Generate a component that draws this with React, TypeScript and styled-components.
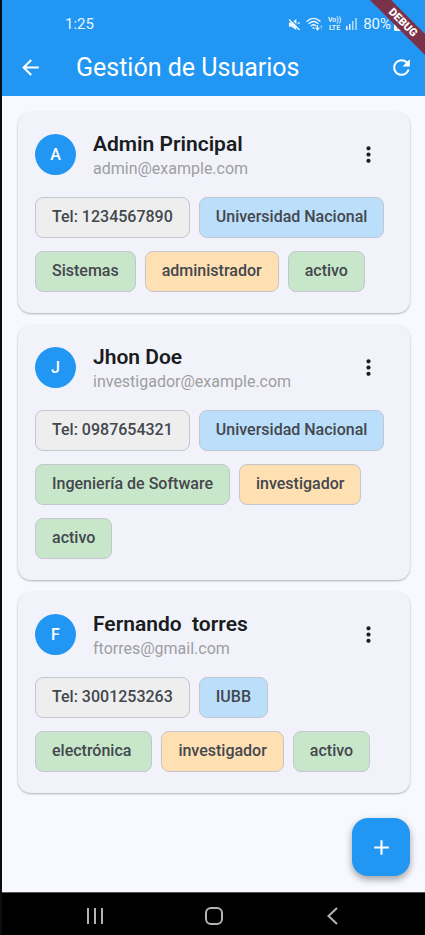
import React from 'react';
import styled, { createGlobalStyle } from 'styled-components';
import { MdAdd, MdArrowBack, MdMoreVert, MdRefresh } from 'react-icons/md';

const GlobalStyle = createGlobalStyle`
  *, *::before, *::after { box-sizing: border-box; }
  body {
    margin: 0;
    background: #f8f9ff;
    font-family: Roboto, 'Liberation Sans', sans-serif;
  }
  h1, h2, p, ul { margin: 0; padding: 0; }
  button { font: inherit; border: 0; padding: 0; cursor: pointer; }
`;

const Screen = styled.div`
  position: relative;
  display: flex;
  flex-direction: column;
  min-height: 100vh;
  overflow: hidden;
  border-left: 2px solid #0c0d0f;
  background: #f8f9ff;
`;

const Header = styled.header`
  background: #2196f3;
  color: #fff;
`;

const StatusBar = styled.div`
  display: flex;
  align-items: center;
  justify-content: space-between;
  height: 38px;
  padding: 10px 23px 0 63px;
  color: #e9f6ff;
  font-size: 15px;
  line-height: 20px;
`;

const StatusIcons = styled.div`
  display: flex;
  align-items: center;
  gap: 5px;
`;

const Volte = styled.span`
  display: flex;
  flex-direction: column;
  align-items: center;
  font-size: 7px;
  font-weight: 600;
  line-height: 8px;
`;

const Battery = styled.span`
  display: flex;
  align-items: center;
  gap: 3px;
`;

const AppBar = styled.div`
  display: flex;
  align-items: center;
  height: 58px;
  padding: 0 3px 0 8px;
`;

const Title = styled.h1`
  flex: 1;
  padding: 2px 0 0 25px;
  font-size: 25px;
  font-weight: 400;
  line-height: 32px;
`;

const IconButton = styled.button`
  display: flex;
  align-items: center;
  justify-content: center;
  width: 41px;
  height: 41px;
  border-radius: 50%;
  background: transparent;
  color: inherit;
  font-size: 25px;
`;

const Ribbon = styled.div`
  position: absolute;
  top: 15px;
  right: -38px;
  width: 120px;
  height: 15px;
  background: #7b3148;
  color: #fff;
  font-size: 11px;
  font-weight: 900;
  line-height: 15px;
  text-align: center;
  transform: rotate(45deg);
`;

const Content = styled.main`
  position: relative;
  flex: 1;
  padding: 16px 15px 98px 16px;
`;

const UserList = styled.ul`
  display: flex;
  flex-direction: column;
  gap: 12px;
  list-style: none;
`;

const Card = styled.li`
  padding: 16px 17px 21px;
  border-radius: 13px;
  background: #f2f3fa;
  box-shadow: 0 1px 2px rgba(0, 0, 0, 0.24), 0 1px 3px rgba(0, 0, 0, 0.06);
`;

const CardHeader = styled.div`
  display: flex;
  align-items: center;
  gap: 17px;
  height: 53px;
  margin-bottom: 16px;
  padding-right: 4px;
  color: #191c20;
`;

const Avatar = styled.div`
  display: flex;
  align-items: center;
  justify-content: center;
  width: 41px;
  height: 41px;
  border-radius: 50%;
  background: #2196f3;
  color: #fff;
  font-size: 16px;
  font-weight: 500;
`;

const Identity = styled.div`
  flex: 1;
  min-width: 0;
`;

const Name = styled.h2`
  font-size: 21px;
  font-weight: 600;
  line-height: 28px;
  white-space: pre;
`;

const Email = styled.p`
  color: #9e9ea1;
  font-size: 16px;
  line-height: 22px;
`;

const Chips = styled.ul`
  display: flex;
  flex-wrap: wrap;
  gap: 13px 9px;
  list-style: none;
`;

const tones = {
  grey: '#eeeeee',
  blue: '#bbdefb',
  green: '#c8e6c9',
  orange: '#ffe0b2',
};

type Tone = keyof typeof tones;

const Chip = styled.li<{ $tone: Tone }>`
  height: 41px;
  padding: 0 16px;
  border: 1px solid #c3c6cf;
  border-radius: 8px;
  background: ${({ $tone }) => tones[$tone]};
  color: #43474e;
  font-size: 16px;
  font-weight: 500;
  line-height: 38px;
  white-space: pre;
`;

const Fab = styled.button`
  position: absolute;
  right: 15px;
  bottom: 16px;
  display: flex;
  align-items: center;
  justify-content: center;
  width: 58px;
  height: 58px;
  border-radius: 16px;
  background: #2196f3;
  color: #fff;
  font-size: 25px;
  box-shadow: 0 4px 6px rgba(0, 0, 0, 0.26), 0 2px 10px rgba(0, 0, 0, 0.12);
`;

const NavBar = styled.nav`
  display: flex;
  align-items: center;
  justify-content: space-around;
  height: 43px;
  padding: 4px 33px 0 34px;
  border-top: 1px solid #56575b;
  background: #000;
  color: #b4b4b4;
`;

const NavButton = styled(IconButton)`
  height: 36px;
`;

type User = {
  name: string;
  email: string;
  phone: string;
  university: string;
  area: string;
  role: string;
  status: string;
};

const users: User[] = [
  {
    name: 'Admin Principal',
    email: 'admin@example.com',
    phone: '1234567890',
    university: 'Universidad Nacional',
    area: 'Sistemas',
    role: 'administrador',
    status: 'activo',
  },
  {
    name: 'Jhon Doe',
    email: 'investigador@example.com',
    phone: '0987654321',
    university: 'Universidad Nacional',
    area: 'Ingeniería de Software',
    role: 'investigador',
    status: 'activo',
  },
  {
    name: 'Fernando  torres',
    email: 'ftorres@gmail.com',
    phone: '3001253263',
    university: 'IUBB',
    area: 'electrónica ',
    role: 'investigador',
    status: 'activo',
  },
];

const MuteIcon = () => (
  <svg width="13" height="13" viewBox="0 0 14 14" aria-hidden="true">
    <path d="M1 4.800h2.800L9 1v12L3.800 9.400H1z" fill="currentColor" />
    <path d="M2 .5 13.500 12" stroke="#2196f3" strokeWidth="1.4" />
    <path d="M1 1.500 12.500 13" stroke="currentColor" strokeWidth="1.4" />
    <path d="M10.500 4.500 12.500 6.500M12.500 4.500 10.500 6.500" stroke="currentColor" strokeWidth="1" />
  </svg>
);

const WifiIcon = () => (
  <svg width="17" height="14" viewBox="0 0 17 14" fill="none" stroke="currentColor" strokeLinecap="round" aria-hidden="true">
    <path d="M1 4.200C4.800.4 10.200.4 14 4.200M3 6.600c2.800-2.600 6.200-2.600 9 0M5.200 8.800c1.500-1.300 3.100-1.300 4.600 0" strokeWidth="1.4" />
    <circle cx="7.500" cy="11" r="1" fill="currentColor" stroke="none" />
    <path d="M11.500 8.500v4M10 11.200l1.500 1.600 1.500-1.600" strokeWidth="1.2" />
    <path d="M15.300 12.500V8.800M14.300 9.800l1-1.100 1 1.100" strokeWidth=".8" opacity=".5" />
  </svg>
);

const SignalIcon = () => (
  <svg width="12" height="12" viewBox="0 0 12 12" fill="currentColor" aria-hidden="true">
    <rect x="0" y="8" width="1.500" height="4" />
    <rect x="3" y="6" width="1.500" height="6" />
    <rect x="6" y="3" width="1.500" height="9" opacity=".75" />
    <rect x="9.300" y="0" width="1.500" height="12" opacity=".75" />
  </svg>
);

const BatteryIcon = () => (
  <svg width="8" height="13" viewBox="0 0 8 13" aria-hidden="true">
    <path d="M2.500 0h3v1.500H7a1 1 0 0 1 1 1V12a1 1 0 0 1-1 1H1a1 1 0 0 1-1-1V2.500a1 1 0 0 1 1-1h1.500z" fill="currentColor" />
    <path d="M4.800 3.500 1.800 8h1.800l-.5 3.200 3.100-4.500H4.300z" fill="#26323c" />
  </svg>
);

const RecentsIcon = () => (
  <svg width="18" height="18" viewBox="0 0 18 18" stroke="currentColor" strokeWidth="2" aria-hidden="true">
    <path d="M2 1v16M9 1v16M16 1v16" />
  </svg>
);

const HomeIcon = () => (
  <svg width="20" height="20" viewBox="0 0 20 20" fill="none" stroke="currentColor" strokeWidth="2" aria-hidden="true">
    <rect x="2" y="2" width="16" height="16" rx="5" />
  </svg>
);

const BackIcon = () => (
  <svg width="18" height="18" viewBox="0 0 18 18" fill="none" stroke="currentColor" strokeWidth="2" aria-hidden="true">
    <path d="M13 1 4.500 9 13 17" />
  </svg>
);

const UserCard = ({ user }: { user: User }) => (
  <Card>
    <CardHeader>
      <Avatar aria-hidden="true">{user.name[0]}</Avatar>
      <Identity>
        <Name>{user.name}</Name>
        <Email>{user.email}</Email>
      </Identity>
      <IconButton type="button" aria-label={`Opciones de ${user.name}`}>
        <MdMoreVert />
      </IconButton>
    </CardHeader>
    <Chips>
      <Chip $tone="grey">Tel: {user.phone}</Chip>
      <Chip $tone="blue">{user.university}</Chip>
      <Chip $tone="green">{user.area}</Chip>
      <Chip $tone="orange">{user.role}</Chip>
      <Chip $tone="green">{user.status}</Chip>
    </Chips>
  </Card>
);

export default function App() {
  return (
    <>
      <GlobalStyle />
      <Screen>
        <Header>
          <StatusBar>
            <span>1:25</span>
            <StatusIcons>
              <MuteIcon />
              <WifiIcon />
              <Volte>
                <span>Vo))</span>
                <span>LTE</span>
              </Volte>
              <SignalIcon />
              <Battery>
                <span>80%</span>
                <BatteryIcon />
              </Battery>
            </StatusIcons>
          </StatusBar>
          <AppBar>
            <IconButton type="button" aria-label="Volver">
              <MdArrowBack />
            </IconButton>
            <Title>Gestión de Usuarios</Title>
            <IconButton type="button" aria-label="Actualizar">
              <MdRefresh />
            </IconButton>
          </AppBar>
        </Header>
        <Content>
          <UserList>
            {users.map((user) => (
              <UserCard key={user.email} user={user} />
            ))}
          </UserList>
          <Fab type="button" aria-label="Agregar usuario">
            <MdAdd />
          </Fab>
        </Content>
        <NavBar aria-label="Sistema">
          <NavButton type="button" aria-label="Recientes">
            <RecentsIcon />
          </NavButton>
          <NavButton type="button" aria-label="Inicio">
            <HomeIcon />
          </NavButton>
          <NavButton type="button" aria-label="Atrás">
            <BackIcon />
          </NavButton>
        </NavBar>
        <Ribbon>DEBUG</Ribbon>
      </Screen>
    </>
  );
}
